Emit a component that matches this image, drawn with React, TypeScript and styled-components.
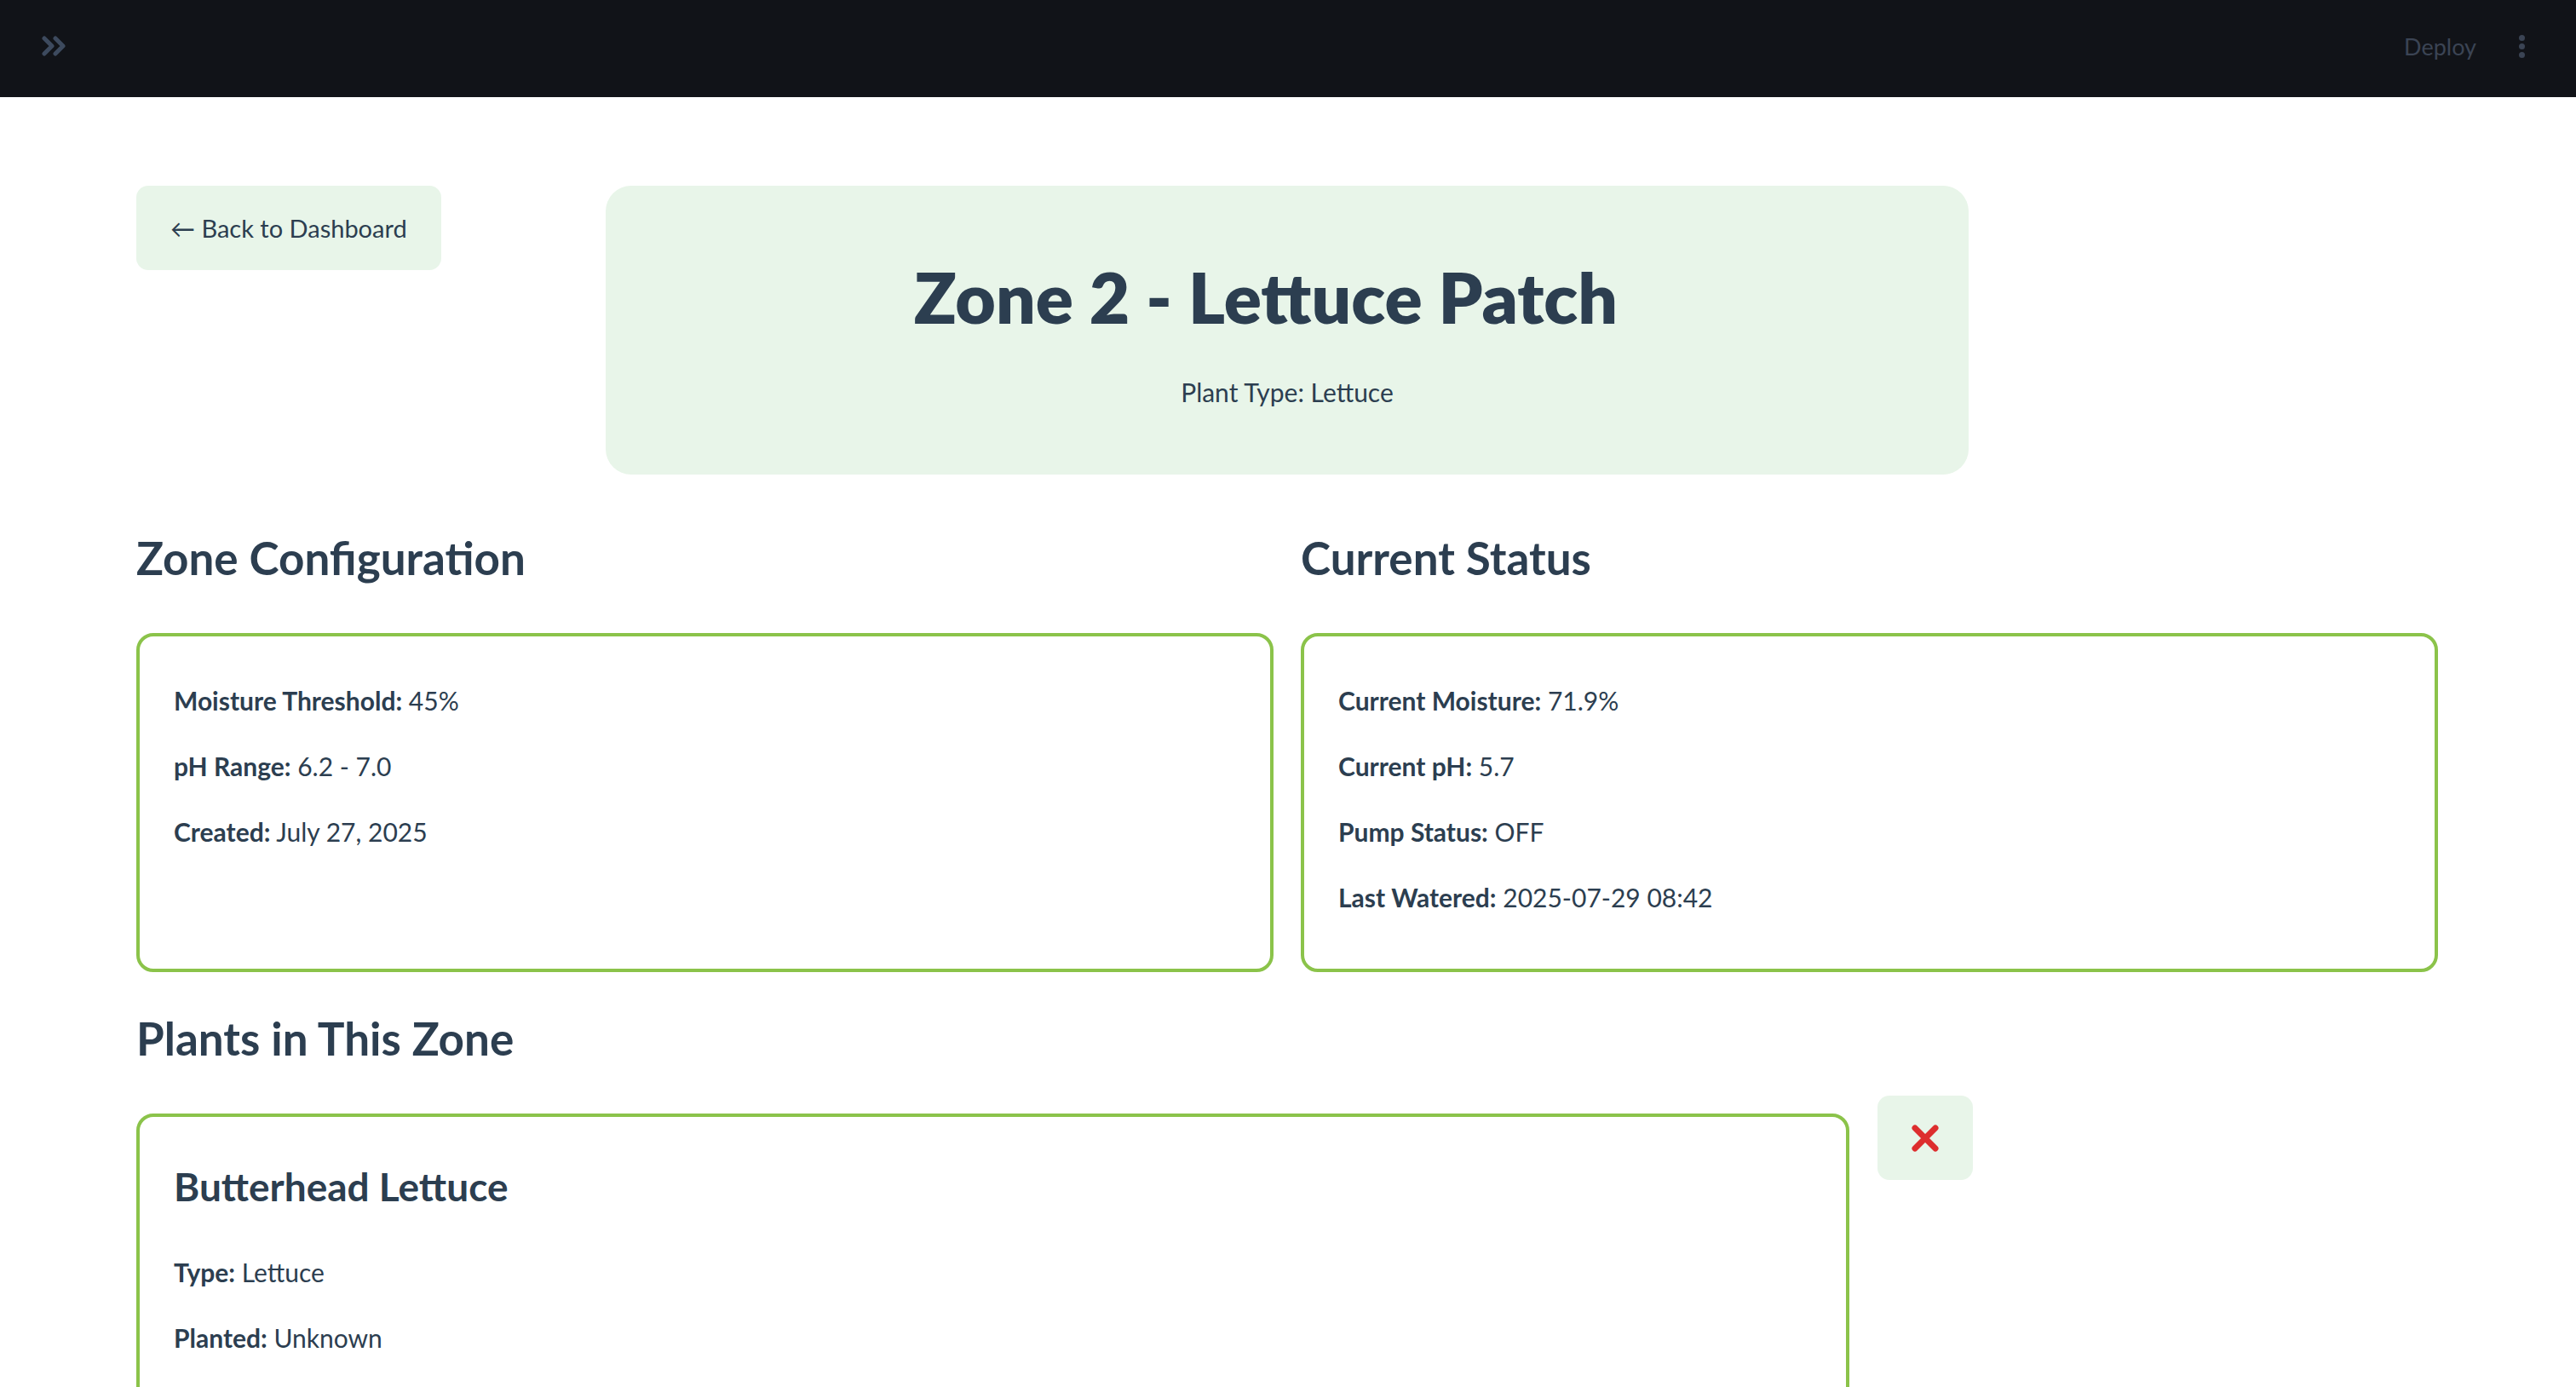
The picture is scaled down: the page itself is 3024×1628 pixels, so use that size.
import React from 'react';
import styled, { createGlobalStyle } from 'styled-components';

const GlobalStyle = createGlobalStyle`
  html, body {
    margin: 0;
    padding: 0;
    background: #ffffff;
    font-family: 'Lato', 'Source Sans Pro', sans-serif;
    color: #2c3e50;
  }
  * { box-sizing: border-box; }
`;

const TopBar = styled.header`
  height: 114px;
  background: #111318;
  display: flex;
  align-items: center;
  justify-content: space-between;
  padding: 0 60px 6px 48px;
`;

const SidebarToggle = styled.button`
  background: none;
  border: none;
  padding: 0;
  width: 32px;
  height: 28px;
  display: flex;
  align-items: center;
  cursor: pointer;
`;

const TopActions = styled.div`
  display: flex;
  align-items: center;
  gap: 50px;
`;

const DeployLink = styled.span`
  font-size: 27px;
  color: #3b4454;
`;

const Kebab = styled.div`
  display: flex;
  flex-direction: column;
  gap: 3px;
`;

const Dot = styled.span`
  width: 7px;
  height: 7px;
  border-radius: 50%;
  background: #3b4454;
`;

const Main = styled.main`
  padding: 104px 162px 0 160px;
`;

const HeroRow = styled.div`
  display: grid;
  grid-template-columns: 1fr 3.085fr 1fr;
  column-gap: 32px;
  align-items: start;
`;

const BackButton = styled.button`
  justify-self: start;
  background: #e8f5e9;
  border: none;
  border-radius: 14px;
  padding: 24px 40px;
  font-family: inherit;
  font-size: 29px;
  line-height: 51px;
  color: #2c3e50;
  cursor: pointer;
`;

const Hero = styled.div`
  background: #e8f5e9;
  border-radius: 30px;
  padding: 82px 40px 73px;
  text-align: center;
`;

const HeroTitle = styled.h1`
  margin: 0 0 39px;
  padding-right: 50px;
  font-size: 82px;
  line-height: 97px;
  font-weight: 800;
  color: #2c3e50;
`;

const HeroSub = styled.p`
  margin: 0;
  font-size: 30px;
  line-height: 48px;
`;

const InfoGrid = styled.div`
  display: grid;
  grid-template-columns: 1fr 1fr;
  column-gap: 32px;
  margin-top: 64px;
`;

const SectionTitle = styled.h3<{ $gap: number }>`
  margin: 0 0 ${p => p.$gap}px;
  font-size: 53px;
  line-height: 67px;
  font-weight: 700;
  color: #2c3e50;
`;

const Card = styled.div`
  border: 4px solid #8bc34a;
  border-radius: 20px;
  padding: 51px 40px 31px;
`;

const Field = styled.p`
  margin: 0 0 29px;
  font-size: 30px;
  line-height: 48px;
  color: #2c3e50;

  b {
    font-weight: 700;
  }
`;

const PlantsSection = styled.section`
  margin-top: 44px;
`;

const PlantRow = styled.div`
  display: grid;
  grid-template-columns: 3.056fr 1fr;
  column-gap: 33px;
  align-items: start;
`;

const PlantCard = styled(Card)`
  margin-top: 21px;
  padding: 55px 40px 120px;
`;

const PlantName = styled.h4`
  margin: 0 0 49px;
  font-size: 46px;
  line-height: 54px;
  font-weight: 700;
  color: #2c3e50;
`;

const RemoveButton = styled.button`
  width: 112px;
  height: 99px;
  background: #e8f5e9;
  border: none;
  border-radius: 14px;
  display: flex;
  align-items: center;
  justify-content: center;
  cursor: pointer;
`;

const config = [
  ['Moisture Threshold:', '45%'],
  ['pH Range:', '6.2 - 7.0'],
  ['Created:', 'July 27, 2025'],
];

const status = [
  ['Current Moisture:', '71.9%'],
  ['Current pH:', '5.7'],
  ['Pump Status:', 'OFF'],
  ['Last Watered:', '2025-07-29 08:42'],
];

const plant = [
  ['Type:', 'Lettuce'],
  ['Planted:', 'Unknown'],
];

const Fields: React.FC<{ rows: string[][] }> = ({ rows }) => (
  <>
    {rows.map(([k, v]) => (
      <Field key={k}>
        <b>{k}</b> {v}
      </Field>
    ))}
  </>
);

export default function App() {
  return (
    <>
      <GlobalStyle />
      <TopBar>
        <SidebarToggle aria-label="Open sidebar">
          <svg width="30" height="24" viewBox="0 0 30 24" fill="none">
            <path d="M4 3 L13 12 L4 21 M17 3 L26 12 L17 21" stroke="#3d4a5e" strokeWidth="5" strokeLinecap="round" strokeLinejoin="round" />
          </svg>
        </SidebarToggle>
        <TopActions>
          <DeployLink>Deploy</DeployLink>
          <Kebab>
            <Dot />
            <Dot />
            <Dot />
          </Kebab>
        </TopActions>
      </TopBar>

      <Main>
        <HeroRow>
          <BackButton>← Back to Dashboard</BackButton>
          <Hero>
            <HeroTitle>Zone 2 - Lettuce Patch</HeroTitle>
            <HeroSub>Plant Type: Lettuce</HeroSub>
          </Hero>
          <div />
        </HeroRow>

        <InfoGrid>
          <SectionTitle $gap={55}>Zone Configuration</SectionTitle>
          <SectionTitle $gap={55}>Current Status</SectionTitle>
          <Card>
            <Fields rows={config} />
          </Card>
          <Card>
            <Fields rows={status} />
          </Card>
        </InfoGrid>

        <PlantsSection>
          <SectionTitle $gap={34}>Plants in This Zone</SectionTitle>
          <PlantRow>
            <PlantCard>
              <PlantName>Butterhead Lettuce</PlantName>
              <Fields rows={plant} />
            </PlantCard>
            <RemoveButton aria-label="Remove plant">
              <svg width="34" height="34" viewBox="0 0 34 34">
                <path d="M5 5 L29 29 M29 5 L5 29" stroke="#dd2e2e" strokeWidth="7" strokeLinecap="round" />
              </svg>
            </RemoveButton>
          </PlantRow>
        </PlantsSection>
      </Main>
    </>
  );
}
